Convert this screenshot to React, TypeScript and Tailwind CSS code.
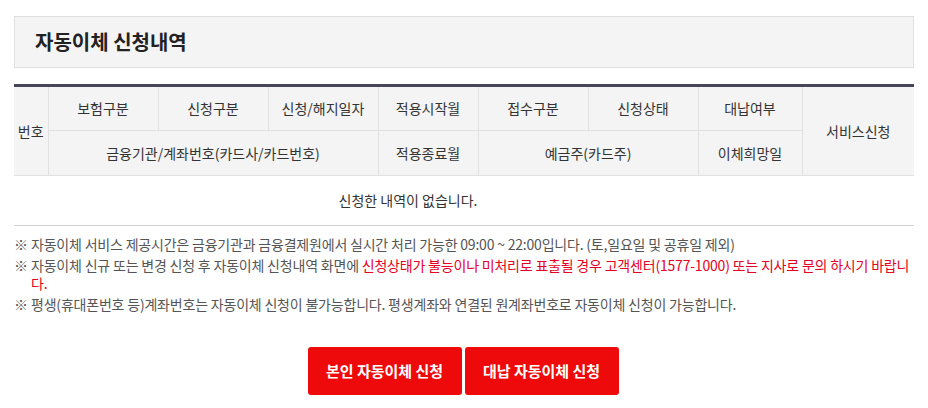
import React from "react";

const font = { fontFamily: '"Noto Sans CJK KR", "Noto Sans", sans-serif' };

export default function App() {
  const th = "border border-[#e1e1e1] bg-[#f4f4f4] font-normal text-[14px] text-[#333] h-[45px] p-0 text-center";
  return (
    <div style={font} className="w-[928px] h-[408px] bg-white px-[14px] pt-[16px]">
      <div className="h-[52px] border border-[#e0e0e0] bg-[#f4f4f4] flex items-center pl-[20px]">
        <h2 className="text-[20px] font-bold text-[#222] tracking-[0px]">자동이체 신청내역</h2>
      </div>
      <table className="mt-[16px] w-[900px] border-collapse table-fixed border-t-[3px] border-t-[#45465a]">
        <colgroup>
          <col className="w-[34px]" />
          <col className="w-[110px]" />
          <col className="w-[110px]" />
          <col className="w-[110px]" />
          <col className="w-[100px]" />
          <col className="w-[110px]" />
          <col className="w-[110px]" />
          <col className="w-[104px]" />
          <col className="w-[112px]" />
        </colgroup>
        <thead>
          <tr>
            <th rowSpan={2} className={th + " border-l-0"}>번호</th>
            <th className={th + " border-t-0"}>보험구분</th>
            <th className={th + " border-t-0"}>신청구분</th>
            <th className={th + " border-t-0"}>신청/해지일자</th>
            <th className={th + " border-t-0"}>적용시작월</th>
            <th className={th + " border-t-0"}>접수구분</th>
            <th className={th + " border-t-0"}>신청상태</th>
            <th className={th + " border-t-0"}>대납여부</th>
            <th rowSpan={2} className={th + " border-r-0"}>서비스신청</th>
          </tr>
          <tr>
            <th colSpan={3} className={th}>금융기관/계좌번호(카드사/카드번호)</th>
            <th className={th}>적용종료월</th>
            <th colSpan={2} className={th}>예금주(카드주)</th>
            <th className={th}>이체희망일</th>
          </tr>
        </thead>
        <tbody>
          <tr>
            <td colSpan={8} className="h-[50px] text-center text-[14px] text-[#333] border-b border-b-[#cfcfd4]">
              신청한 내역이 없습니다.
            </td>
            <td className="border-b border-b-[#cfcfd4]"></td>
          </tr>
        </tbody>
      </table>
      <ul className="mt-[9px] text-[14px] leading-[18px] text-[#555] tracking-[-0.2px]">
        <li className="flex mb-[3px]">
          <span className="w-[17px] shrink-0">※</span>
          <span>자동이체 서비스 제공시간은 금융기관과 금융결제원에서 실시간 처리 가능한 09:00 ~ 22:00입니다. (토,일요일 및 공휴일 제외)</span>
        </li>
        <li className="flex mb-[3px]">
          <span className="w-[17px] shrink-0">※</span>
          <span>
            자동이체 신규 또는 변경 신청 후 자동이체 신청내역 화면에{" "}
            <span className="text-[#e60023]">신청상태가 불능이나 미처리로 표출될 경우 고객센터(1577-1000) 또는 지사로 문의 하시기 바랍니다.</span>
          </span>
        </li>
        <li className="flex">
          <span className="w-[17px] shrink-0">※</span>
          <span>평생(휴대폰번호 등)계좌번호는 자동이체 신청이 불가능합니다. 평생계좌와 연결된 원계좌번호로 자동이체 신청이 가능합니다.</span>
        </li>
      </ul>
      <div className="mt-[34px] flex justify-center gap-[3px] pr-[2px]">
        <button className="w-[154px] h-[48px] rounded-[3px] bg-[#ee0a0a] text-white text-[15px] font-bold">본인 자동이체 신청</button>
        <button className="w-[154px] h-[48px] rounded-[3px] bg-[#ee0a0a] text-white text-[15px] font-bold">대납 자동이체 신청</button>
      </div>
    </div>
  );
}
